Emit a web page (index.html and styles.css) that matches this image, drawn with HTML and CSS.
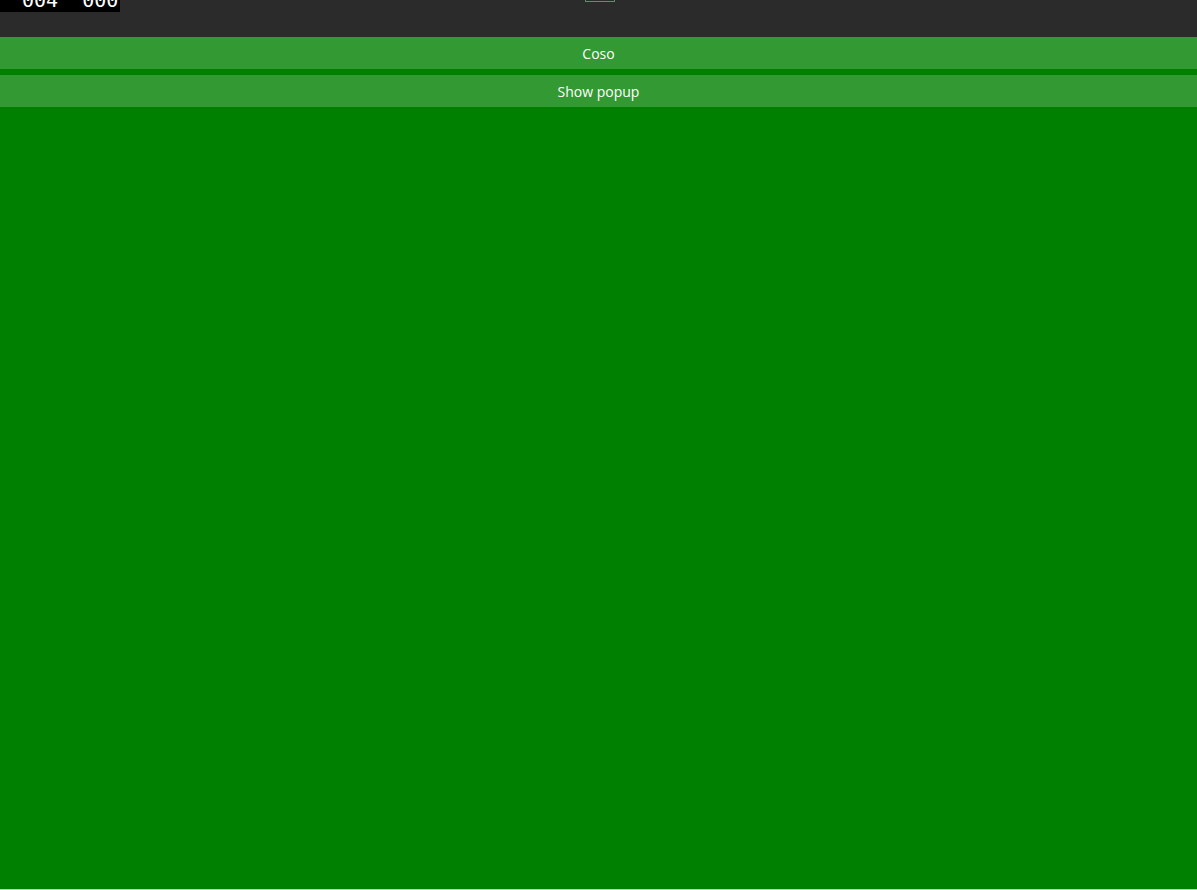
FILE: index.html
```html
<!DOCTYPE html>
<html>
<head>
<meta charset="utf-8">
<link rel="stylesheet" href="styles.css">
</head>
<body>
<div class="page">
  <div class="topbar">
    <div class="fps"><div class="fps-text"><span class="n1">004</span><span class="n2">000</span></div></div>
    <div class="handle"></div>
  </div>
  <div class="buttons">
    <div class="btn">Coso</div>
    <div class="btn">Show popup</div>
  </div>
</div>
</body>
</html>
```
FILE: styles.css
```css
html, body {
  margin: 0;
  padding: 0;
}
body {
  background: #008000;
  font-family: "Open Sans", "Noto Sans", sans-serif;
}
.page {
  height: 889px;
  border-bottom: 1px solid #c8c8c8;
  display: flex;
  flex-direction: column;
  background: #008000;
}
.topbar {
  position: relative;
  height: 37px;
  background: #2b2b2b;
  display: flex;
  justify-content: center;
  padding-left: 3px;
}
.fps {
  position: absolute;
  top: 0;
  left: 0;
  width: 120px;
  height: 12px;
  background: #000;
  overflow: hidden;
}
.fps-text {
  margin-top: -10px;
  font-family: "DejaVu Sans Mono", monospace;
  font-size: 20px;
  line-height: 20px;
  color: #fff;
  display: flex;
  white-space: nowrap;
}
.n1 { margin-left: 22px; }
.n2 { margin-left: 24px; }
.handle {
  width: 28px;
  height: 1px;
  border: 1px solid #5f8c72;
  border-top: none;
}
.buttons {
  display: flex;
  flex-direction: column;
  gap: 6px;
}
.btn {
  height: 32px;
  background: #339933;
  color: #fff;
  font-size: 14px;
  display: flex;
  align-items: center;
  justify-content: center;
}
```
